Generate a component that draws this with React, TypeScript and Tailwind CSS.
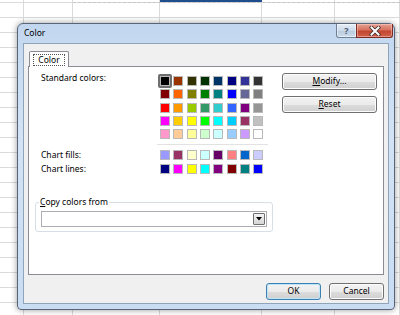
import React from "react";

const standard = [
  ["#000000", "#993300", "#333300", "#003300", "#003366", "#000080", "#333399", "#333333"],
  ["#800000", "#FF6600", "#808000", "#008000", "#008080", "#0000FF", "#666699", "#808080"],
  ["#FF0000", "#FF9900", "#99CC00", "#339966", "#33CCCC", "#3366FF", "#800080", "#969696"],
  ["#FF00FF", "#FFCC00", "#FFFF00", "#00FF00", "#00FFFF", "#00CCFF", "#993366", "#C0C0C0"],
  ["#FF99CC", "#FFCC99", "#FFFF99", "#CCFFCC", "#CCFFFF", "#99CCFF", "#CC99FF", "#FFFFFF"],
];
const chartFills = ["#9999FF", "#993366", "#FFFFCC", "#CCFFFF", "#660066", "#FF8080", "#0066CC", "#CCCCFF"];
const chartLines = ["#000080", "#FF00FF", "#FFFF00", "#00FFFF", "#800080", "#800000", "#008080", "#0000FF"];

const font = { fontFamily: '"Noto Sans", "Open Sans", sans-serif' };

function Swatch({ color, selected }: { color: string; selected?: boolean }) {
  return (
    <div className="relative h-[10px] w-[10px]">
      {selected && (
        <div className="absolute -inset-[2px] rounded-[2px] border-2 border-[#6f6f6f]" />
      )}
      <div
        className="relative h-full w-full border border-[#b9b9b9]"
        style={{ backgroundColor: color }}
      />
    </div>
  );
}

function SwatchRow({ colors }: { colors: string[] }) {
  return (
    <div className="grid grid-cols-[repeat(8,10px)] gap-x-[3.33px]">
      {colors.map((c, i) => (
        <Swatch key={i} color={c} />
      ))}
    </div>
  );
}

function Button({
  children,
  className = "",
  isDefault,
}: {
  children: React.ReactNode;
  className?: string;
  isDefault?: boolean;
}) {
  return (
    <div
      className={`flex h-[17px] items-center justify-center rounded-[3px] border bg-[linear-gradient(to_bottom,#f3f3f3_0%,#ebebeb_50%,#dddddd_51%,#cfcfcf_100%)] text-[8.5px] text-black ${
        isDefault
          ? "border-[#3c7fb1] shadow-[inset_0_0_0_1px_#bfe6f8]"
          : "border-[#707070] shadow-[inset_0_0_0_1px_#fcfcfc]"
      } ${className}`}
    >
      {children}
    </div>
  );
}

function Spreadsheet() {
  const cols = [24, 49, 87, 102, 73, 65];
  return (
    <div className="absolute inset-0 flex bg-white bg-[repeating-linear-gradient(to_bottom,transparent_0,transparent_14px,#dadada_14px,#dadada_15px)] bg-[position:0_3px]">
      {cols.map((w, i) => (
        <div
          key={i}
          className="h-full border-r border-[#dadada]"
          style={{ width: w }}
        />
      ))}
      <div className="absolute left-[73px] top-[2px] w-[327px] border-t border-dashed border-[#c6c6c6]" />
      <div className="absolute left-[160px] top-0 h-[2px] w-[102px] bg-[#1f4e8c]" />
    </div>
  );
}

export default function App() {
  return (
    <div className="relative h-[315px] w-[400px] overflow-hidden" style={font}>
      <Spreadsheet />

      <div className="absolute left-[17px] top-[23px] flex h-[287px] w-[378px] flex-col rounded-t-[6px] rounded-b-[4px] border border-[#56657a] bg-[linear-gradient(to_bottom,#c2d7ef,#d3e3f5_40%,#c9dcf2)] px-[5px] pb-[5px] shadow-[0_0_6px_rgba(0,0,0,0.4)]">
        {/* title bar */}
        <div className="flex h-[19px] items-start justify-between">
          <span className="mt-[4px] pl-[1px] text-[8.5px] leading-[10px] text-black">Color</span>
          <div className="-mr-[4px] flex">
            <div className="flex h-[14px] w-[21px] items-center justify-center rounded-bl-[3px] border border-t-0 border-[#6f7f95] bg-[linear-gradient(to_bottom,#e4edf7,#ccdaea_50%,#b9cbe0_51%,#cddcec)] shadow-[inset_0_0_0_1px_rgba(255,255,255,0.5)]">
              <span className="text-[9px] font-bold leading-none text-[#4d5a6b]">?</span>
            </div>
            <div className="-ml-px flex h-[14px] w-[37px] items-center justify-center rounded-br-[3px] border border-t-0 border-[#7a2a22] bg-[linear-gradient(to_bottom,#e6a193,#d7725f_45%,#c24531_55%,#d0604b)] shadow-[inset_0_0_0_1px_rgba(255,220,210,0.45)]">
              <svg width="12" height="10" viewBox="0 0 12 10">
                <path d="M2.5 1.5 L9.5 8.5 M9.5 1.5 L2.5 8.5" stroke="#3a2a28" strokeWidth="3.6" strokeLinecap="square" />
                <path d="M2.5 1.5 L9.5 8.5 M9.5 1.5 L2.5 8.5" stroke="#ffffff" strokeWidth="2" strokeLinecap="square" />
              </svg>
            </div>
          </div>
        </div>

        {/* client area */}
        <div className="flex flex-1 flex-col border border-[#8fa3bb] bg-[#f0f0f0] px-[4px] pt-[7px]">
          {/* tab */}
          <div className="relative z-10 -mb-px ml-px flex h-[16px] w-[40px] items-center justify-center rounded-t-[2px] border border-b-0 border-[#898c95] bg-white">
            <span className="border border-dotted border-[#555] px-[4px] text-[8.5px] leading-[10px] text-black">
              Color
            </span>
          </div>

          {/* panel */}
          <div className="flex h-[209px] flex-col border border-[#898c95] bg-white pt-[6px]">
            <div className="flex">
              <div className="ml-[12px] mt-[3px] flex flex-col">
                <div className="flex">
                  <span className="-mt-[3px] w-[119px] text-[8.5px] leading-[10px] text-black">
                    Standard colors:
                  </span>
                  <div className="grid grid-cols-[repeat(8,10px)] gap-[3.33px]">
                    {standard.flat().map((c, i) => (
                      <Swatch key={i} color={c} selected={i === 0} />
                    ))}
                  </div>
                </div>
                <div className="ml-[116px] mt-[5px] h-px w-[111px] bg-[#e2e2e2]" />
                <div className="mt-[5px] flex items-center">
                  <span className="w-[119px] text-[8.5px] leading-[10px] text-black">Chart fills:</span>
                  <SwatchRow colors={chartFills} />
                </div>
                <div className="mt-[3.33px] flex items-center">
                  <span className="w-[119px] text-[8.5px] leading-[10px] text-black">Chart lines:</span>
                  <SwatchRow colors={chartLines} />
                </div>
              </div>

              <div className="ml-auto mr-[6px] flex w-[95px] flex-col gap-[6px]">
                <Button>
                  <span>
                    <span className="underline">M</span>odify...
                  </span>
                </Button>
                <Button>
                  <span>
                    <span className="underline">R</span>eset
                  </span>
                </Button>
              </div>
            </div>

            {/* group box */}
            <div className="relative ml-[6px] mt-[28px] h-[30px] w-[238px] rounded-[3px] border border-[#d5dfe5] pl-[5px] pt-[8px]">
              <span className="absolute -top-[6px] left-[3px] bg-white px-px text-[8.5px] leading-[10px] text-black">
                <span className="underline">C</span>opy colors from
              </span>
              <div className="flex h-[16px] w-[226px] justify-end border border-[#abadb3] bg-white p-px">
                <div className="flex w-[12px] items-center justify-center rounded-[1px] border border-[#707070] bg-[linear-gradient(to_bottom,#f3f3f3,#e4e4e4_50%,#d6d6d6)]">
                  <svg width="6" height="4" viewBox="0 0 6 4">
                    <path d="M0 0 H6 L3 3.5 Z" fill="#000" />
                  </svg>
                </div>
              </div>
            </div>
          </div>

          {/* bottom buttons */}
          <div className="mt-[8px] flex justify-end gap-[8px]">
            <Button isDefault className="w-[55px]">OK</Button>
            <Button className="w-[55px]">Cancel</Button>
          </div>
        </div>
      </div>
    </div>
  );
}
